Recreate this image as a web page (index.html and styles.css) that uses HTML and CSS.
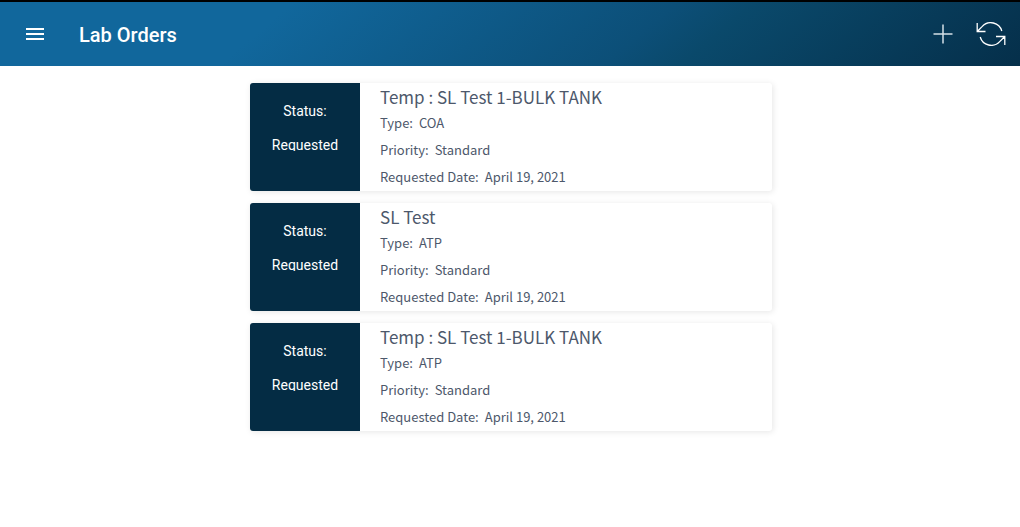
FILE: index.html
```html
<!DOCTYPE html>
<html lang="en">
<head>
  <meta charset="utf-8">
  <meta name="viewport" content="width=device-width, initial-scale=1">
  <title>Lab Orders</title>
  <link rel="stylesheet" href="styles.css">
</head>
<body>
  <header class="toolbar">
    <button class="icon-button" type="button" aria-label="Open menu">
      <svg width="18" height="12" viewBox="0 0 18 12" fill="#fff" aria-hidden="true"><path d="M0 0h18v2H0zM0 5h18v2H0zM0 10h18v2H0z"/></svg>
    </button>
    <h1 class="toolbar-title">Lab Orders</h1>
    <div class="toolbar-actions">
      <button class="icon-button" type="button" aria-label="Add order">
        <svg width="20" height="20" viewBox="0 0 20 20" fill="none" stroke="#d5e0e6" stroke-width="1.5" aria-hidden="true"><path d="M10 .5v19M.5 10h19"/></svg>
      </button>
      <button class="icon-button" type="button" aria-label="Refresh">
        <svg width="30" height="24" viewBox="0 0 30 24" fill="none" stroke="#fff" stroke-width="1.3" aria-hidden="true"><path d="M1.200 1v8.500H9.500M1.500 9.200L6.300 4.400A11.500 11.500 0 0 1 25.800 9M28.800 23v-8.500H20M28.500 14.800L23.700 19.600A11.500 11.500 0 0 1 4.200 15"/></svg>
      </button>
    </div>
  </header>
  <main class="orders">
    <article class="card">
      <div class="status"><p class="status-line">Status:</p><p class="status-line">Requested</p></div>
      <div class="details">
        <h2 class="name">Temp : SL Test 1-BULK TANK</h2>
        <p class="field"><span>Type:</span><span>COA</span></p>
        <p class="field"><span>Priority:</span><span>Standard</span></p>
        <p class="field"><span>Requested Date:</span><span>April 19, 2021</span></p>
      </div>
    </article>
    <article class="card">
      <div class="status"><p class="status-line">Status:</p><p class="status-line">Requested</p></div>
      <div class="details">
        <h2 class="name">SL Test</h2>
        <p class="field"><span>Type:</span><span>ATP</span></p>
        <p class="field"><span>Priority:</span><span>Standard</span></p>
        <p class="field"><span>Requested Date:</span><span>April 19, 2021</span></p>
      </div>
    </article>
    <article class="card">
      <div class="status"><p class="status-line">Status:</p><p class="status-line">Requested</p></div>
      <div class="details">
        <h2 class="name">Temp : SL Test 1-BULK TANK</h2>
        <p class="field"><span>Type:</span><span>ATP</span></p>
        <p class="field"><span>Priority:</span><span>Standard</span></p>
        <p class="field"><span>Requested Date:</span><span>April 19, 2021</span></p>
      </div>
    </article>
  </main>
</body>
</html>
```
FILE: styles.css
```css
* { box-sizing: border-box; }

body {
  margin: 0;
  background: #fff;
  color: #4d586b;
  font-family: "Noto Sans CJK SC", "Open Sans", sans-serif;
}

h1, h2, p { margin: 0; }

.toolbar {
  display: flex;
  align-items: center;
  height: 66px;
  padding: 0 5px 0 11px;
  border-top: 2px solid #000;
  background: linear-gradient(140deg, #11679c 27%, #0c4f78 62%, #0a496b 69%, #052f4a) border-box;
}

.icon-button {
  display: flex;
  align-items: center;
  justify-content: center;
  width: 48px;
  height: 48px;
  padding: 0;
  border: 0;
  background: none;
}

.toolbar-title {
  margin-left: 20px;
  padding-top: 2px;
  color: #fff;
  font: 500 20px/32px Roboto, sans-serif;
}

.toolbar-actions {
  display: flex;
  margin-left: auto;
}

.orders {
  display: flex;
  flex-direction: column;
  gap: 12px;
  max-width: 554px;
  margin: 0 auto;
  padding: 17px 15px 16px 17px;
}

.card {
  display: flex;
  overflow: hidden;
  border-radius: 3px;
  background: #fff;
  box-shadow: 1px 1px 6px rgba(0, 0, 0, 0.1);
}

.status {
  flex: 0 0 110px;
  display: flex;
  flex-direction: column;
  gap: 18px;
  padding-top: 20px;
  background: #042c44;
  color: #fff;
  text-align: center;
  font: 400 14px/16px Roboto, sans-serif;
}

/* One tight line each: descenders are cut at the box edge */
.status-line {
  height: 16px;
  overflow: hidden;
}

.status-line:last-child { height: 14px; }

.details {
  flex: 1;
  min-width: 0;
  padding: 2px 0 1px 20px;
}

.name {
  font-size: 17px;
  font-weight: 400;
  line-height: 24px;
}

.field {
  display: flex;
  gap: 6px;
  font-size: 13px;
  line-height: 27px;
}
```
